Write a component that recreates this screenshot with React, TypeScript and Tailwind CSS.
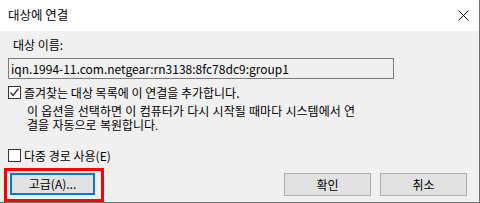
const FONT = { fontFamily: '"Noto Sans CJK KR", "Noto Sans", sans-serif' };

const CheckBox = ({ checked }: { checked?: boolean }) => (
    <span className="w-[13px] h-[13px] shrink-0 border border-[#333333] bg-white flex items-center justify-center">
        {checked && (
            <svg width="11" height="11" viewBox="0 0 11 11">
                <path d="M1.5 5.5 L4 8.5 L9.5 1.5" fill="none" stroke="#333333" strokeWidth="1.3" />
            </svg>
        )}
    </span>
);

const Button = ({ label, focused }: { label: string; focused?: boolean }) => (
    <button
        className={
            focused
                ? "w-[85px] h-[22px] bg-[#e1e1e1] border-2 border-[#0078d7] text-[12px] text-black leading-none flex items-center justify-center"
                : "w-[87px] h-[23px] bg-[#e1e1e1] border border-[#adadad] text-[12px] text-black leading-none flex items-center justify-center"
        }
    >
        {label}
    </button>
);

export default function App() {
    return (
        <div className="w-[480px] h-[203px] flex flex-col border-r border-b border-[#707070] select-none" style={FONT}>
            <div className="h-[31px] bg-white flex items-center justify-between pl-[8px] pr-[10px] shrink-0">
                <span className="text-[12.5px] text-black">대상에 연결</span>
                <svg width="11" height="11" viewBox="0 0 11 11">
                    <path d="M0.5 0.5 L10.5 10.5 M10.5 0.5 L0.5 10.5" stroke="#000" strokeWidth="1" />
                </svg>
            </div>
            <div className="flex-1 bg-[#f0f0f0] flex flex-col pl-[8px] text-[12px] text-black">
                <div className="mt-[6px] pl-[5px] h-[15px] leading-[15px]">대상 이름:</div>
                <div className="mt-[6px] w-[386px] h-[21px] border border-[#7a7a7a] bg-[#f0f0f0] pl-[2px] flex items-center leading-none">
                    iqn.1994-11.com.netgear:rn3138:8fc78dc9:group1
                </div>
                <div className="mt-[7px] h-[13px] flex items-center gap-[3px]">
                    <CheckBox checked />
                    <span className="leading-[13px]">즐겨찾는 대상 목록에 이 연결을 추가합니다.</span>
                </div>
                <p
                    className="mt-[6px] ml-[19px] leading-[14px] whitespace-nowrap"
                    style={{ fontFamily: '"Liberation Sans", "Noto Sans CJK KR", sans-serif' }}
                >
                    이 옵션을 선택하면 이 컴퓨터가 다시 시작될 때마다 시스템에서 연<br />결을 자동으로 복원합니다.
                </p>
                <div className="mt-[16px] h-[13px] flex items-center gap-[3px]">
                    <CheckBox />
                    <span className="leading-[13px]">다중 경로 사용(E)</span>
                </div>
                <div className="mt-[11px] flex items-start pr-[12px]">
                    <div className="relative ml-[2px]">
                        <Button label="고급(A)..." focused />
                        <span className="absolute left-[-6px] top-[-5px] w-[100px] h-[34px] border-[3px] border-[#ff0000] pointer-events-none" />
                    </div>
                    <div className="ml-auto flex gap-[9px]">
                        <Button label="확인" />
                        <Button label="취소" />
                    </div>
                </div>
            </div>
        </div>
    );
}
